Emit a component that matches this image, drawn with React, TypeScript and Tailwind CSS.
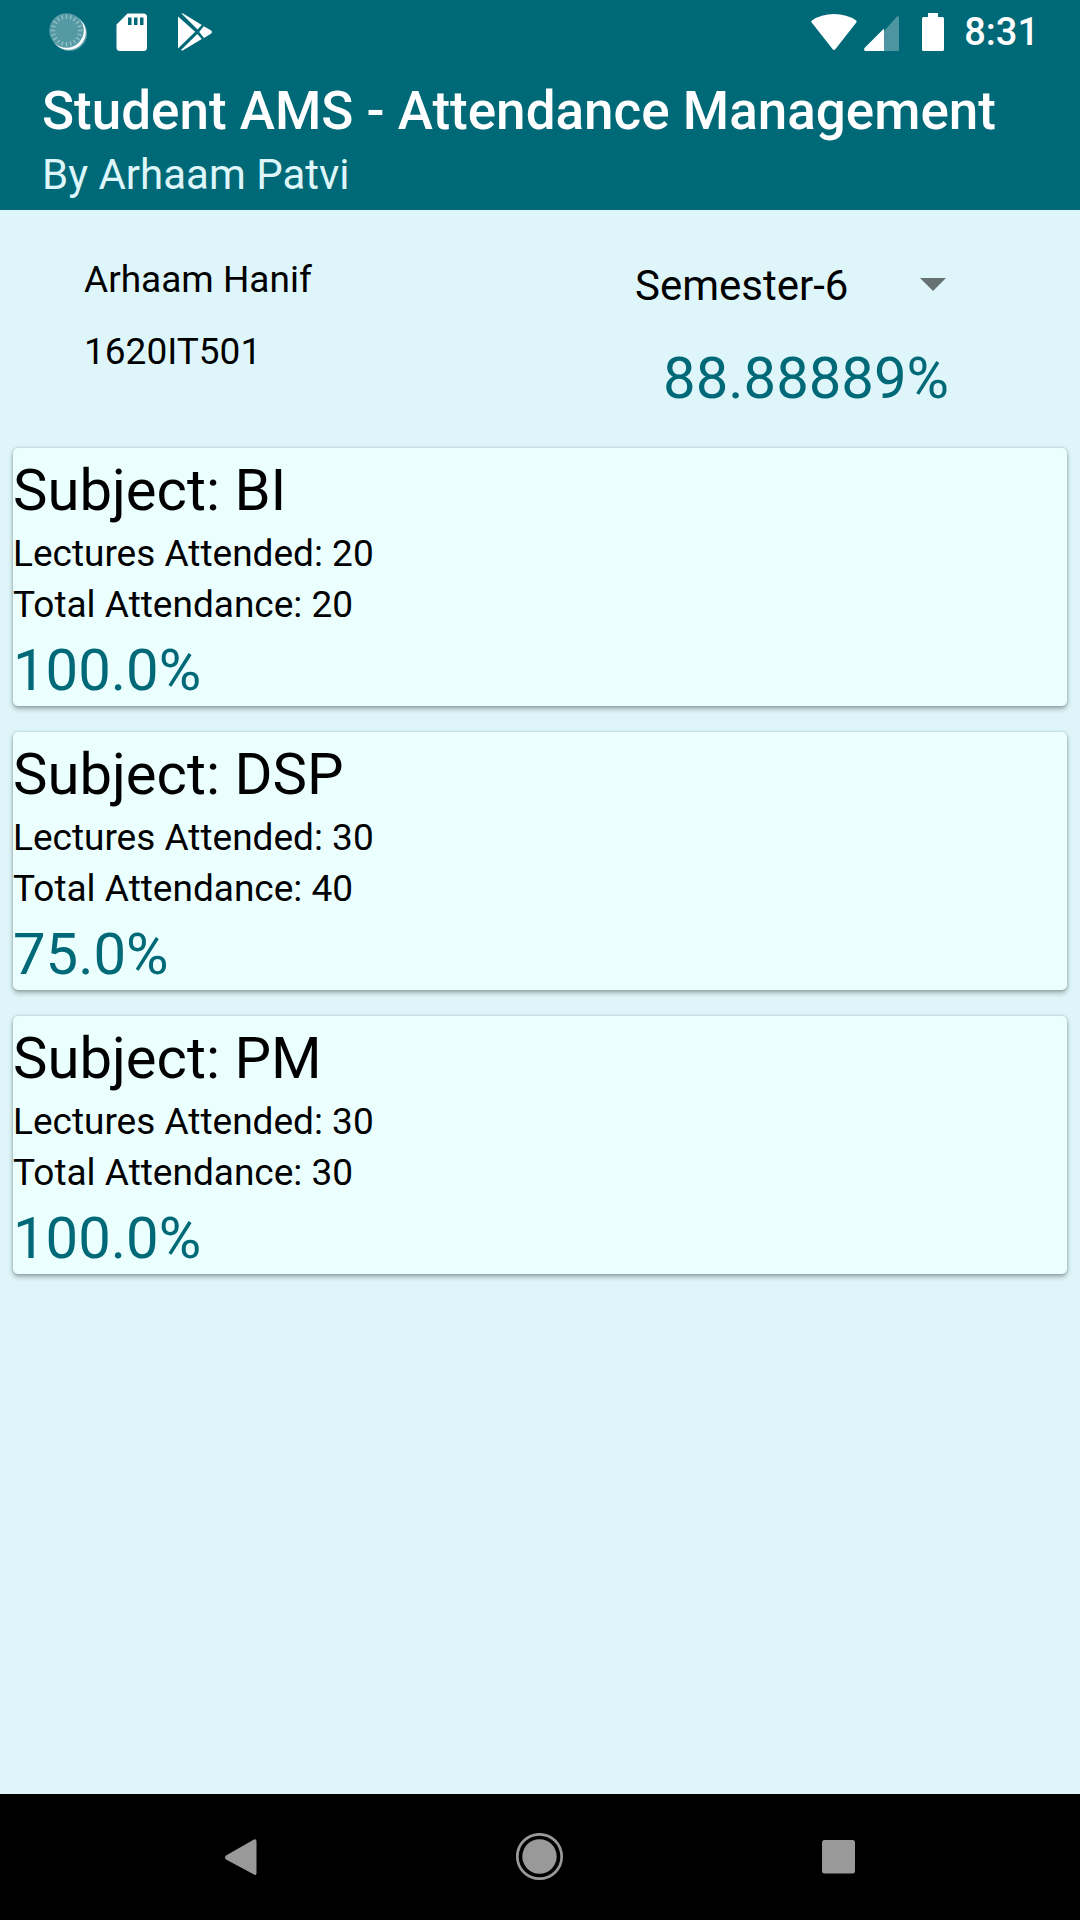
import { useState } from 'react';

const subjects = [
  { name: 'BI', attended: 20, total: 20, percent: '100.0%' },
  { name: 'DSP', attended: 30, total: 40, percent: '75.0%' },
  { name: 'PM', attended: 30, total: 30, percent: '100.0%' },
];

const semesters = ['Semester-1', 'Semester-2', 'Semester-3', 'Semester-4', 'Semester-5', 'Semester-6'];

const spokes = Array.from({ length: 20 }, (_, i) => i * 18);

function SyncIcon() {
  return (
    <svg className="h-10 w-10" viewBox="0 0 40 40" aria-hidden="true">
      <circle cx="21.500" cy="21.500" r="17.500" fill="#5c9fa9" />
      <circle cx="20.300" cy="20.300" r="17.500" fill="#fff" />
      <circle cx="18.500" cy="18.500" r="17.300" fill="#5599a4" />
      {spokes.map((a) => (
        <line
          key={a}
          x1="18.5"
          y1="2.5"
          x2="18.5"
          y2="7"
          stroke="#90bfc6"
          strokeWidth="1.4"
          transform={`rotate(${a} 18.5 18.5)`}
        />
      ))}
    </svg>
  );
}

function SdCardIcon() {
  return (
    <svg className="h-10 w-8" viewBox="0 0 32 40" aria-hidden="true">
      <path
        fillRule="evenodd"
        d="M11.5 1.5 H27.5 A3.5 3.5 0 0 1 31 5 V35.5 A3.5 3.5 0 0 1 27.5 39 H4 A3.5 3.5 0 0 1 .5 35.5 V12.5 Z M12 5.5 V13 H15.5 V5.5 Z M18 5.5 V13 H21.500 V5.5 Z M24 5.5 V13 H27.500 V5.5 Z"
        fill="#fff"
      />
    </svg>
  );
}

function PlayStoreIcon() {
  return (
    <svg className="h-10 w-9" viewBox="0 0 36 40" fill="#fff" aria-hidden="true">
      <path d="M0 4.500 L17.200 19.800 L0 36.500 Z" />
      <path d="M3.500 1.500 Q4.500 1 5.500 1.800 L23.800 13 L19.500 17.500 Z" />
      <path d="M25.800 14.200 L33.200 18.500 Q35 20 33.200 21.500 L26 26 L21.200 20 Z" />
      <path d="M19.300 22 L23.800 27 L5.500 38 Q4.200 39 3 38 Z" />
    </svg>
  );
}

function WifiIcon() {
  return (
    <svg className="h-10 w-12" viewBox="0 0 48 40" aria-hidden="true">
      <path
        d="M1.800 8.500 Q11 2 24 2 Q37 2 46.200 8.500 Q47 9.500 46.300 10.500 L25.500 37 Q24 38.800 22.500 37 L1.700 10.500 Q1 9.500 1.800 8.500 Z"
        fill="#fff"
      />
    </svg>
  );
}

function SignalIcon() {
  return (
    <svg className="h-10 w-9" viewBox="0 0 36 40" aria-hidden="true">
      <path d="M20 19 L33 4.500 Q35 3.500 35 5.500 V37.500 Q35 39 33.500 39 H20 Z" fill="#4d96a1" />
      <path d="M20 16.500 V39 H1 Q-.5 38 .5 36 Z" fill="#fff" />
    </svg>
  );
}

function BatteryIcon() {
  return (
    <svg className="h-10 w-6" viewBox="0 0 24 40" aria-hidden="true">
      <path
        d="M7 1 H17 V5 H21.500 Q23 5 23 6.500 V37.500 Q23 39 21.500 39 H2.500 Q1 39 1 37.500 V6.500 Q1 5 2.500 5 H7 Z"
        fill="#fff"
      />
    </svg>
  );
}

function StatusBar() {
  return (
    <div className="flex h-[63px] items-center justify-between pr-[41px] pl-12">
      <div className="flex items-center">
        <SyncIcon />
        <div className="ml-7">
          <SdCardIcon />
        </div>
        <div className="ml-[30px]">
          <PlayStoreIcon />
        </div>
      </div>
      <div className="flex items-center">
        <WifiIcon />
        <div className="ml-[6px]">
          <SignalIcon />
        </div>
        <div className="ml-[21px]">
          <BatteryIcon />
        </div>
        <span className="ml-[19px] pt-0.5 text-[38px] leading-[51px] font-medium">8:31</span>
      </div>
    </div>
  );
}

function NavBar() {
  return (
    <nav className="grid h-[126px] grid-cols-3 bg-black px-[92px]">
      <button type="button" aria-label="Back" className="flex items-center justify-center">
        <svg className="h-12 w-12" viewBox="0 0 48 48" aria-hidden="true">
          <path
            d="M9 22.500 L37 6.500 Q39.500 5.500 39.500 8.500 V40 Q39.500 43 37 41.500 L9 26.500 Q7 24.500 9 22.500 Z"
            fill="#999"
          />
        </svg>
      </button>
      <button type="button" aria-label="Home" className="flex items-center justify-center">
        <svg className="h-12 w-12" viewBox="0 0 48 48" aria-hidden="true">
          <circle cx="23.500" cy="23.500" r="22.200" fill="none" stroke="#999" strokeWidth="2.700" />
          <circle cx="23.500" cy="23.500" r="17.200" fill="#999" />
        </svg>
      </button>
      <button type="button" aria-label="Recent apps" className="flex items-center justify-center">
        <svg className="h-12 w-12" viewBox="0 0 48 48" aria-hidden="true">
          <rect x="7" y="7" width="33" height="33.500" rx="2.500" fill="#999" />
        </svg>
      </button>
    </nav>
  );
}

export default function App() {
  const [semester, setSemester] = useState('Semester-6');

  return (
    <div className="flex min-h-screen flex-col bg-[#def6f9] font-['Roboto',sans-serif] text-black">
      <header className="bg-[#006978] text-white">
        <StatusBar />
        <div className="px-[42px] pt-[18px] pb-[9px]">
          <h1 className="text-[53px] leading-[60px] font-medium whitespace-nowrap">
            Student AMS - Attendance Management
          </h1>
          <p className="mt-2 text-[42px] leading-[52px] text-[#def6f9]">By Arhaam Patvi</p>
        </div>
      </header>

      <main className="flex-1">
        <section className="flex justify-between pt-11 pr-[131px] pb-[34px] pl-[84px]">
          <div className="flex flex-col gap-[21px] text-[37px] leading-[51px]">
            <p>Arhaam Hanif</p>
            <p>1620IT501</p>
          </div>
          <div className="w-[314px] pt-1.5">
            <div className="relative">
              <select
                aria-label="Semester"
                value={semester}
                onChange={(e) => setSemester(e.target.value)}
                className="block h-[52px] w-full appearance-none bg-transparent text-[42px] leading-[52px]"
              >
                {semesters.map((s) => (
                  <option key={s}>{s}</option>
                ))}
              </select>
              <svg
                className="pointer-events-none absolute top-[18px] right-[3px] h-[13px] w-[26px]"
                viewBox="0 0 26 13"
                aria-hidden="true"
              >
                <path d="M0 0 H26 L13 13 Z" fill="#667173" />
              </svg>
            </div>
            <p className="mt-[30px] text-right text-[58px] leading-[72px] text-[#006978]">88.88889%</p>
          </div>
        </section>

        <ul className="flex flex-col gap-[26px] px-[13px]">
          {subjects.map((s) => (
            <li
              key={s.name}
              className="rounded-[5px] bg-[#ebffff] pt-1.5 shadow-[0_3px_5px_rgba(0,0,0,0.3),0_0_3px_rgba(0,0,0,0.2)]"
            >
              <h2 className="mb-0.5 text-[58px] leading-[72px]">Subject: {s.name}</h2>
              <p className="text-[37px] leading-[51px]">Lectures Attended: {s.attended}</p>
              <p className="text-[37px] leading-[51px]">Total Attendance: {s.total}</p>
              <p className="mt-1 text-[58px] leading-[72px] text-[#006978]">{s.percent}</p>
            </li>
          ))}
        </ul>
      </main>

      <NavBar />
    </div>
  );
}
